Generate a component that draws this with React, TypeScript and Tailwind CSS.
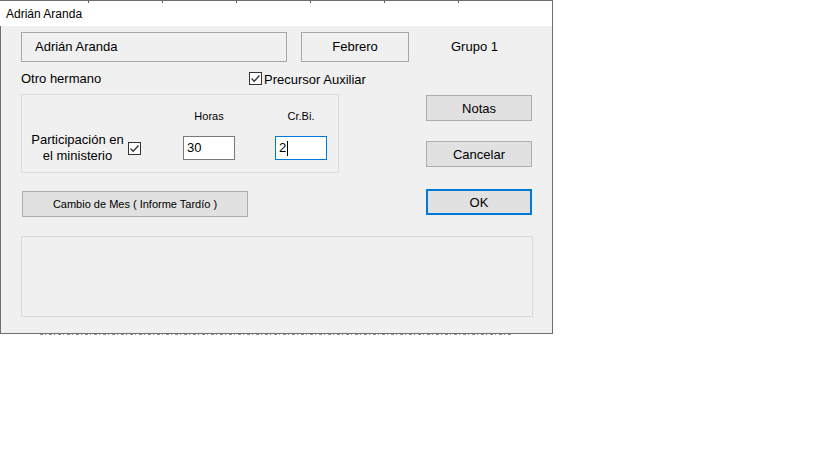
import React from "react";

const font = { fontFamily: '"Liberation Sans", Arial, sans-serif' };

function Check() {
  return (
    <div className="w-[13px] h-[13px] border border-[#333333] bg-white flex items-center justify-center shrink-0">
      <svg width="11" height="11" viewBox="0 0 11 11">
        <path d="M1.5 5.5 L4.2 8.2 L9.5 2.5" fill="none" stroke="#333333" strokeWidth="1.3" />
      </svg>
    </div>
  );
}

export default function App() {
  const ticks = [88, 162, 236, 310, 384, 458];
  return (
    <div className="w-[819px] h-[460px] bg-white text-black" style={font}>
      <div className="w-[553px] h-[334px] flex flex-col">
        <div className="relative h-[26px] bg-white border-t border-t-[#6e6e6e] border-r border-r-[#6e6e6e] flex items-center pl-[6px] text-[12px]">
          {ticks.map((x) => (
            <div key={x} className="absolute top-0 w-[1px] h-[2px] bg-[#555555]" style={{ left: x }} />
          ))}
          Adrián Aranda
        </div>
        <div className="flex-1 bg-[#f0f0f0] border-l border-r border-b border-[#6e6e6e] pl-[20px] pt-[6px] text-[13px]">
          {/* Row 1 */}
          <div className="flex items-center">
            <div className="w-[266px] h-[30px] border border-[#a6a6a6] flex items-center pl-[13px]">Adrián Aranda</div>
            <div className="ml-[14px] w-[108px] h-[30px] border border-[#a6a6a6] flex items-center justify-center">Febrero</div>
            <div className="ml-[42px]">Grupo 1</div>
          </div>
          {/* Row 2 */}
          <div className="mt-[10px] h-[13px] flex items-center">
            <div className="w-[228px] pt-[1px]">Otro hermano</div>
            <Check />
            <div className="ml-[2px] pt-[2px]">Precursor Auxiliar</div>
          </div>
          {/* Row 3 */}
          <div className="mt-[9px] flex">
            <div className="w-[318px] flex flex-col">
              <div className="h-[79px] border border-[#dcdcdc] pt-[15px] pl-[6px] flex flex-col">
                <div className="flex h-[13px] text-[11px] leading-[13px]">
                  <div className="w-[155px]" />
                  <div className="w-[52px] text-center">Horas</div>
                  <div className="ml-[40px] w-[52px] text-center">Cr.Bi.</div>
                </div>
                <div className="mt-[13px] h-[24px] flex items-center">
                  <div className="w-[99px] text-center leading-[16px] whitespace-nowrap">
                    Participación en<br />el ministerio
                  </div>
                  <div className="ml-[1px]"><Check /></div>
                  <div className="ml-[42px] w-[52px] h-[24px] bg-white border border-[#7a7a7a] flex items-center pl-[3px]">30</div>
                  <div className="ml-[40px] w-[52px] h-[24px] bg-white border border-[#0078d7] flex items-center pl-[3px]">
                    2<span className="inline-block w-[1px] h-[15px] bg-black ml-[1px]" />
                  </div>
                </div>
              </div>
              <div className="mt-[18px] ml-[1px] w-[226px] h-[26px] bg-[#e1e1e1] border border-[#adadad] flex items-center justify-center text-[11px]">
                Cambio de Mes ( Informe Tardío )
              </div>
            </div>
            <div className="ml-[87px] w-[106px] flex flex-col">
              <div className="mt-[1px] h-[26px] bg-[#e1e1e1] border border-[#adadad] flex items-center justify-center pt-[1px]">Notas</div>
              <div className="mt-[20px] h-[26px] bg-[#e1e1e1] border border-[#adadad] flex items-center justify-center pt-[1px]">Cancelar</div>
              <div className="mt-[22px] h-[26px] bg-[#e1e1e1] border-2 border-[#0078d7] flex items-center justify-center pt-[1px]">OK</div>
            </div>
          </div>
          {/* Bottom box */}
          <div className="mt-[19px] w-[512px] h-[81px] border border-[#dadada]" />
        </div>
      </div>
      <div className="ml-[40px] w-[473px] h-[1px] opacity-50 bg-[repeating-linear-gradient(90deg,#222_0px,#222_3px,transparent_3px,transparent_5px,#222_5px,#222_6px,transparent_6px,transparent_9px)]" />
    </div>
  );
}
